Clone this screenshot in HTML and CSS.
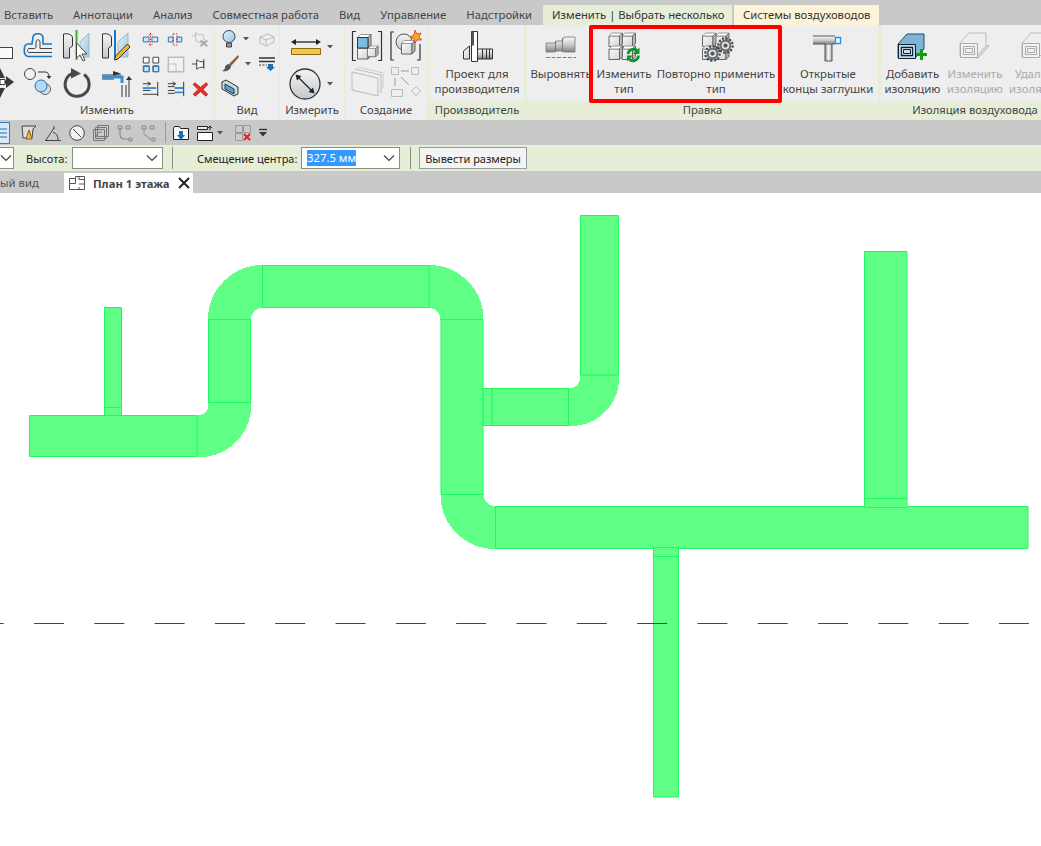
FILE: index.html
```html
<!DOCTYPE html>
<html lang="ru">
<head>
<meta charset="utf-8">
<title>План 1 этажа</title>
<link rel="stylesheet" href="styles.css">
</head>
<body>
<svg class="defs" aria-hidden="true">
  <defs>
    <linearGradient id="gb" x1="0" y1="0" x2="1" y2="1"><stop offset="0" stop-color="#e4f0f8"/><stop offset="1" stop-color="#9cc6e4"/></linearGradient>
    <linearGradient id="gg" x1="0" y1="0" x2="0" y2="1"><stop offset="0" stop-color="#f4f4f4"/><stop offset="1" stop-color="#c4c8cc"/></linearGradient>
    <linearGradient id="gm" x1="0" y1="0" x2="0" y2="1"><stop offset="0" stop-color="#fafafa"/><stop offset=".55" stop-color="#c4c8cc"/><stop offset="1" stop-color="#7e8388"/></linearGradient>
    <linearGradient id="gv" x1="0" y1="0" x2="1" y2="0"><stop offset="0" stop-color="#8a8f94"/><stop offset=".5" stop-color="#fafafa"/><stop offset="1" stop-color="#a4a8ac"/></linearGradient>
    <linearGradient id="gf" x1="0" y1="0" x2="1" y2="1"><stop offset="0" stop-color="#fbfbfb"/><stop offset="1" stop-color="#d0d3d6"/></linearGradient>
    <symbol id="cube" viewBox="0 0 15 15" overflow="visible">
      <path d="M.5 3.500h10.500v10.500H.5z" fill="url(#gf)" stroke="#666"/>
      <path d="M.5 3.500l3-3h10.500l-3 3z" fill="#fff" stroke="#999"/>
      <path d="M11 3.500l3-3v10.500l-3 3z" fill="#b4b8bd" stroke="#666"/>
    </symbol>
    <symbol id="gear" viewBox="0 0 16 16">
      <circle cx="8" cy="8" r="6.800" fill="none" stroke="#45484b" stroke-width="2" stroke-dasharray="2.100 1.450"/>
      <circle cx="8" cy="8" r="5.600" fill="#6a6e72"/>
      <circle cx="8" cy="8" r="3.600" fill="#e2e4e6"/>
      <circle cx="8" cy="8" r="2" fill="#54585c"/>
    </symbol>
    <symbol id="chev" viewBox="0 0 12 8"><path d="M1 1.500l5 5 5-5" fill="none" stroke="#444" stroke-width="1.200"/></symbol>
    <symbol id="caret" viewBox="0 0 6 4"><path d="M0 0h6L3 3.500z" fill="#555"/></symbol>
  </defs>
</svg>

<div class="tabs">
  <span class="tab">Вставить</span>
  <span class="tab">Аннотации</span>
  <span class="tab">Анализ</span>
  <span class="tab">Совместная работа</span>
  <span class="tab">Вид</span>
  <span class="tab">Управление</span>
  <span class="tab">Надстройки</span>
  <span class="tab tab-modify">Изменить | Выбрать несколько</span>
  <span class="tab tab-system">Системы воздуховодов</span>
</div>

<div class="ribbon">
  <section class="panel p-modify">
    <div class="body modify-grid">
      <svg class="big" width="20" height="36" viewBox="0 27 20 36"><rect x="-12" y="47.500" width="24.500" height="11" fill="#fafafa" stroke="#444"/></svg>
      <svg class="big" width="38" height="36" viewBox="20 27 38 36"><path d="M52 44h-9v-6c0-5-9-6-10-1l-1 7h-4c-5 0-5 12 0 12.500h24" fill="none" stroke="#1a78c2" stroke-width="1.600"/><path d="M52 48.500H40V42c0-3-4-3-4 0v5c0 1-1 1.500-2 1.500h-5c-2 0-2 4 0 4h23" fill="none" stroke="#444"/></svg>
      <svg class="big" width="38" height="36" viewBox="58 27 38 36"><path d="M63.500 34c5-1 9 1 9 4v8l-3 2v10h-6z" fill="url(#gg)" stroke="#333"/><path d="M76.500 30v30" stroke="#3fae2a" stroke-width="2"/><path d="M80 42l9-9v24h-9z" fill="url(#gb)" stroke="#9bb"/><path d="M76.500 43v15l3.500-3 3 6 2-1-3-6h5z" fill="#fff" stroke="#444"/></svg>
      <svg class="big" width="42" height="36" viewBox="96 27 42 36"><path d="M102.500 34c5-1 9 1 9 4v8l-3 2v10h-6z" fill="url(#gg)" stroke="#333"/><path d="M115 30v30" stroke="#1a78c2" stroke-width="2"/><path d="M118 42l10-9v24h-10z" fill="url(#gb)" stroke="#9bb"/><path d="M130 47l-12 12-3.500 1 1-4 12-12z" fill="#f5b52a" stroke="#333"/></svg>
      <svg class="small" width="24" height="24" viewBox="138 27 25 25"><path d="M142.500 37.500h6v5h-6zM151.500 37.500h6v5h-6z" fill="#d5e8f7" stroke="#1a6fb5"/><path d="M148 35h4M148 45h4M150 33v14" stroke="#d22" stroke-dasharray="1.500 1.500"/></svg>
      <svg class="small" width="24" height="24" viewBox="163 27 25 25"><path d="M167.500 37.500h5v5h-5zM176.500 37.500h5v5h-5z" fill="#d5e8f7" stroke="#1a6fb5"/><path d="M172.500 34h4v12h-4z" fill="none" stroke="#d22" stroke-dasharray="1.500 1.500"/></svg>
      <svg class="small" width="24" height="24" viewBox="189 27 25 25"><path d="M192 36h4M196 33l3 2h5l1 8h-5l-4-2z" fill="#eee" stroke="#bbb"/><path d="M201 41l7 6M208 41l-7 6" stroke="#aaa" stroke-width="2"/></svg>
      <svg class="small" width="24" height="24" viewBox="138 51 25 25"><path d="M142.500 56.500h6v6h-6zM152.500 56.500h6v6h-6zM142.500 65.500h6v6h-6zM152.500 65.500h6v6h-6z" fill="#fff" stroke="#444"/><path d="M143 66h5.500v5.500H143zM153 66h5.500v5.500H153z" fill="#cfe3f4" stroke="#1a6fb5"/></svg>
      <svg class="small" width="24" height="24" viewBox="163 51 25 25"><path d="M167.500 56.500h16v15h-16z" fill="#f1f1f1" stroke="#bbb" stroke-width="1.500"/><path d="M167.500 63.500h8v8h-8z" fill="none" stroke="#bbb"/></svg>
      <svg class="small" width="24" height="24" viewBox="189 51 25 25"><path d="M192 63.500h5M197 59l3 2h4v6h-4l-3 2z" fill="#fafafa" stroke="#444"/><path d="M204.500 58.500v10" stroke="#444"/></svg>
      <svg class="small" width="24" height="24" viewBox="138 76 25 25"><path d="M142 83h8M142 90h8M142 94h16" stroke="#333"/><path d="M147 81l3 2-3 2" fill="none" stroke="#333"/><path d="M142 87.500h14" stroke="#3b8fd8" stroke-width="2"/><path d="M157.500 81v15" stroke="#333"/></svg>
      <svg class="small" width="24" height="24" viewBox="163 76 25 25"><path d="M167 83h8M167 86h7M167 90h7M167 93h7" stroke="#333"/><path d="M172 81l3 2-3 2" fill="none" stroke="#333"/><path d="M174 87.500h9M174 92h9" stroke="#3b8fd8" stroke-width="2"/><path d="M183.500 81v15" stroke="#333"/></svg>
      <svg class="small" width="24" height="24" viewBox="189 76 25 25"><path d="M195 82l6 5 6-5 1.500 2-5 5 5 5-2 2-5.500-5-5.500 5-2-2 5-5-5-5z" fill="#e8302c" stroke="#c41f1c"/></svg>
      <svg class="big" width="20" height="36" viewBox="0 63 20 36"><path d="M-5 77l5-10 5 10zM-5 87l5 10 5-10zM6 75l8 6-8 6z" fill="#3a3a3a"/><path d="M0 78.500h5v5H0z" fill="#fff" stroke="#333"/><path d="M5 81h2" stroke="#333" stroke-width="3"/></svg>
      <svg class="big" width="38" height="36" viewBox="20 63 38 36"><circle cx="30" cy="73" r="5.500" fill="#f2f2f2" stroke="#444"/><path d="M38 71h7c3 0 4 2 4 5" fill="none" stroke="#333"/><path d="M46.500 75h5l-2.500 3z" fill="#333"/><circle cx="45" cy="88" r="5.500" fill="#cfe3f4" stroke="#666"/><circle cx="41" cy="85" r="6" fill="#b9d8ef" stroke="#1a6fb5"/></svg>
      <svg class="big" width="38" height="36" viewBox="58 63 38 36"><path d="M72 72.500a12 12 0 1 0 12 1" fill="none" stroke="#434a4f" stroke-width="3"/><path d="M71 67l10 5.500-10 5z" fill="#434a4f"/></svg>
      <svg class="big" width="42" height="36" viewBox="96 63 42 36"><path d="M102 74h19M102 78h12M122 96V84M126 96V84M129 96V79" stroke="#333"/><path d="M113 70l8 2.500-8 2.500z" fill="#333"/><path d="M129 75l3 4h-6z" fill="#333"/><path d="M102 76h20v6" fill="none" stroke="#3b8fd8" stroke-width="3"/></svg>
    </div>
    <div class="label">Изменить</div>
  </section>

  <section class="panel p-view">
    <div class="body view-grid">
      <span class="cell"><svg width="16" height="20" viewBox="0 0 16 20"><circle cx="8" cy="7.500" r="6" fill="url(#gb)" stroke="#345"/><path d="M5.500 14h5v4h-5z" fill="#999" stroke="#444"/></svg><svg class="caret" width="6" height="4"><use href="#caret"/></svg></span>
      <svg width="18" height="16" viewBox="0 0 18 16"><path d="M2 6l8-3 6 3v5l-8 4-6-3z" fill="#eee" stroke="#bbb"/><path d="M2 6l6 3 8-3M8 9v6" fill="none" stroke="#bbb"/></svg>
      <span class="cell"><svg width="18" height="18" viewBox="0 0 18 18"><path d="M17 0L8 9l2 2 8-9z" fill="#9a5a2a"/><path d="M8 9l2 2c0 4-5 6-9 5 3-1 3-3 3-4s2-3 4-3z" fill="#555"/></svg><svg class="caret" width="6" height="4"><use href="#caret"/></svg></span>
      <svg width="18" height="16" viewBox="0 0 18 16"><path d="M1 2h16M1 5.500h16" stroke="#333" stroke-width="1.500"/><path d="M1 9h8" stroke="#333" stroke-dasharray="2 1.500"/><path d="M10 8h5v3h2l-4.500 4L8 11h2z" fill="#1a6fb5"/></svg>
      <span class="cell"><svg width="18" height="18" viewBox="0 0 18 18"><path d="M1 3l4-2 12 7v7l-4 2L1 10z" fill="#cdd" stroke="#333"/><path d="M4 5l9 5v5L4 10z" fill="#5aa2dc" stroke="#234"/></svg></span>
      <span></span>
    </div>
    <div class="label">Вид</div>
  </section>

  <section class="panel p-measure">
    <div class="body measure-grid">
      <svg width="30" height="18" viewBox="0 0 30 18"><path d="M2 4h26" stroke="#222" stroke-width="1.300"/><path d="M0 4l5-3v6zM30 4l-5-3v6z" fill="#222"/><path d="M.5 10.500h29v6H.5z" fill="#f1c84a" stroke="#8a6a12"/></svg>
      <svg class="caret" width="6" height="4"><use href="#caret"/></svg>
      <svg width="32" height="32" viewBox="0 0 32 32"><circle cx="16" cy="16" r="15" fill="url(#gg)" stroke="#333" stroke-width="1.300"/><path d="M8 8l16 16" stroke="#222" stroke-width="1.300"/><path d="M6.500 6.500l6 1.500-4.500 4.500zM25.500 25.500l-6-1.500 4.500-4.500z" fill="#222"/></svg>
      <svg class="caret" width="6" height="4"><use href="#caret"/></svg>
    </div>
    <div class="label">Измерить</div>
  </section>

  <section class="panel p-create">
    <div class="body create-grid">
      <svg width="32" height="32" viewBox="0 0 32 32"><path d="M5 1.500H1.500v29H5M27 1.500h3.500v29H27" fill="none" stroke="#333" stroke-width="1.200"/><use href="#cube" x="6" y="15" width="15" height="15"/><use href="#cube" x="16" y="15" width="12" height="13"/><use href="#cube" x="6" y="4" width="15" height="15"/><path d="M6.500 7.500h10.500v10.500H6.500z" fill="#7fb9e0" stroke="#333"/></svg>
      <svg width="32" height="32" viewBox="0 0 32 32"><path d="M4 2H1v28h3M27 30h3V14" fill="none" stroke="#333" stroke-width="1.200"/><circle cx="14" cy="12" r="8" fill="url(#gg)" stroke="#555"/><use href="#cube" x="11" y="10" width="15" height="15"/><path d="M25 0l2 4 4-1-2 4 3 3-5 0-2 3-1-4-4-2 4-2z" fill="#f5a623" stroke="#d9261c" stroke-width=".7"/></svg>
      <svg width="34" height="34" viewBox="0 0 34 34"><path d="M2 6l26 6v18L2 24z" fill="#eee" stroke="#bbb"/><path d="M5 3l26 6v18" fill="none" stroke="#bbb"/><path d="M8 1l25 6v15" fill="none" stroke="#ccc"/></svg>
      <svg width="30" height="32" viewBox="0 0 30 32"><path d="M.5.500h7v7h-7zM20.500.500h7v7h-7zM.5 22.500h11v7H.5z" fill="#eee" stroke="#bbb"/><path d="M20.500 24l4.500-4.500 4.500 4.500-4.500 4.500z" fill="#eee" stroke="#bbb"/><path d="M10 4h8M4 11v8M10 10l8 8" stroke="#999"/></svg>
    </div>
    <div class="label">Создание</div>
  </section>

  <section class="panel p-maker ctx">
    <div class="body tools">
      <div class="tool w-maker">
        <div class="ico"><svg width="32" height="32" viewBox="0 0 32 32"><path d="M2.500 29v-8l6-5v13z" fill="url(#gf)" stroke="#333"/><path d="M16.500 19h15v10h-15z" fill="url(#gm)" stroke="#333"/><path d="M21.500 19v10M25.500 19v10M28.500 19v10" stroke="#333"/><path d="M10.500 1.500h6v30h-6z" fill="#fff" stroke="#333"/><path d="M10.500 1.500h2.500v14h-2.500z" fill="#555"/></svg></div>
        <div class="txt">Проект для<br>производителя</div>
      </div>
    </div>
    <div class="label">Производитель</div>
  </section>

  <section class="panel p-edit ctx">
    <div class="body tools">
      <div class="tool w-align">
        <div class="ico"><svg width="32" height="24" viewBox="0 0 32 24"><path d="M1 9h9l1-2h6l2-4h11v15H19l-2-1h-6l-1 1H1z" fill="url(#gm)" stroke="#777" stroke-width=".8"/><path d="M10.500 7v11M17.500 4v14" stroke="#666" stroke-width=".8"/><path d="M1 23.500h30" stroke="#3b8fd8" stroke-dasharray="4 1.500"/></svg></div>
        <div class="txt">Выровнять</div>
      </div>
      <div class="tool w-change">
        <div class="ico"><svg width="32" height="32" viewBox="0 0 32 32"><use href="#cube" x="13.500" y="2.500" width="15" height="15"/><use href="#cube" x=".5" y="2.500" width="15" height="15"/><use href="#cube" x="13.500" y="15.500" width="15" height="15"/><use href="#cube" x=".5" y="15.500" width="15" height="15"/><path d="M20 24a5.500 5.500 0 0 1 9.500-3M30.500 25.500a5.500 5.500 0 0 1-9.500 3.500" fill="none" stroke="#12932c" stroke-width="2.800"/><path d="M31.500 17.500v6.500h-6.500zM19 31.500v-6h6z" fill="#12932c"/></svg></div>
        <div class="txt">Изменить<br>тип</div>
      </div>
      <div class="tool w-reapply">
        <div class="ico"><svg width="32" height="32" viewBox="0 0 32 32"><use href="#cube" x="15" y="2.500" width="15" height="15"/><use href="#cube" x="2" y="2.500" width="15" height="15"/><use href="#cube" x="15" y="15.500" width="15" height="15"/><use href="#cube" x="2" y="15.500" width="15" height="15"/><use href="#gear" x="17" y="7" width="17" height="17"/><use href="#gear" x="4" y="15" width="17" height="17"/></svg></div>
        <div class="txt">Повторно применить<br>тип</div>
      </div>
      <div class="tool w-caps">
        <div class="ico"><svg width="32" height="32" viewBox="0 0 32 32"><path d="M13 14h7v17h-7z" fill="url(#gv)" stroke="#555"/><path d="M1 6h22v8H1z" fill="url(#gm)"/><path d="M1 6h22M1 14h12M20 14h3" stroke="#555" fill="none"/><path d="M23.500 7.500h5v6h-5z" fill="#fff" stroke="#2a8fe0" stroke-width="1.400"/></svg></div>
        <div class="txt">Открытые<br>концы заглушки</div>
      </div>
    </div>
    <div class="label">Правка</div>
  </section>

  <section class="panel p-ins ctx">
    <div class="body tools">
      <div class="tool w-ins">
        <div class="ico"><svg width="32" height="28" viewBox="0 0 32 28"><path d="M1 12L10 2h17v15l-9 9H1z" fill="#7fb4d4" stroke="#1a4a70"/><path d="M1.500 12.500h17v14h-17z" fill="#bcdcf0" stroke="#123"/><path d="M4.500 15.500h11v8h-11z" fill="#fff" stroke="#123" stroke-width="1.300"/><path d="M6.500 17.500h7v4h-7z" fill="#cde" stroke="#123"/><path d="M24.500 17v11M19 22.500h11" stroke="#0aa012" stroke-width="3"/></svg></div>
        <div class="txt">Добавить<br>изоляцию</div>
      </div>
      <div class="tool w-ins off">
        <div class="ico"><svg width="32" height="30" viewBox="0 0 32 30"><path d="M1 12L10 2h17v15l-9 9H1z" fill="#eee" stroke="#bbb"/><path d="M1.500 12.500h17v14h-17z" fill="#f2f2f2" stroke="#aaa"/><path d="M4.500 15.500h11v8h-11zM6.500 17.500h7v4h-7z" fill="none" stroke="#aaa"/><path d="M30 15l-9 10-3 3 1-4 9-10z" fill="#ddd" stroke="#bbb"/></svg></div>
        <div class="txt">Изменить<br>изоляцию</div>
      </div>
      <div class="tool w-ins off">
        <div class="ico"><svg width="32" height="30" viewBox="0 0 32 30"><path d="M1 12L10 2h17v15l-9 9H1z" fill="#eee" stroke="#bbb"/><path d="M1.500 12.500h17v14h-17z" fill="#f2f2f2" stroke="#aaa"/><path d="M4.500 15.500h11v8h-11zM6.500 17.500h7v4h-7z" fill="none" stroke="#aaa"/></svg></div>
        <div class="txt">Удалить<br>изоляцию</div>
      </div>
    </div>
    <div class="label">Изоляция воздуховода</div>
  </section>

  <div class="callout"></div>
</div>

<div class="qat">
  <span class="qat-sel"><svg width="8" height="18" viewBox="0 0 8 18"><path d="M0 5h7M0 9h7M0 13h7" stroke="#1a6fb5"/></svg></span>
  <svg width="16" height="16" viewBox="0 0 16 16"><path d="M1 1l14 0-3 3-1 9H2z" fill="#ddd" stroke="#444"/><path d="M8 5l3 9H5z" fill="#f2b84a" stroke="#8a5a12"/></svg>
  <svg width="16" height="16" viewBox="0 0 16 16"><path d="M0 15.500h16M1 15L9 3" stroke="#444"/><path d="M8 7a8 8 0 0 1 5 8" fill="none" stroke="#444"/><path d="M9 1v3" stroke="#444"/></svg>
  <svg width="16" height="16" viewBox="0 0 16 16"><circle cx="8" cy="8" r="7.300" fill="#f2f2f2" stroke="#444"/><path d="M4 4l8 8" stroke="#444"/></svg>
  <svg width="16" height="16" viewBox="0 0 16 16"><path d="M4.500.5h11v11h-11zM2.500 2.500h11v11h-11zM.5 4.500h11v11H.5z" fill="#ccc" stroke="#777"/><path d="M3 13c0-4 2-6 6-6" fill="none" stroke="#777"/></svg>
  <svg width="16" height="16" viewBox="0 0 16 16"><path d="M3 3v7c0 3 2 4 5 4h4" fill="none" stroke="#888" stroke-width="1.200"/><path d="M1 1h4v3H1zM12 13h3v3h-3zM9 1h4v3H9z" fill="none" stroke="#888"/></svg>
  <svg width="16" height="16" viewBox="0 0 16 16"><path d="M3 4v5l7 6" fill="none" stroke="#888" stroke-dasharray="2 1" stroke-width="1.200"/><path d="M1 1h4v3H1zM11 13h3v3h-3zM9 1h4v3H9z" fill="none" stroke="#888"/></svg>
  <i class="qat-sep"></i>
  <svg width="16" height="16" viewBox="0 0 16 16"><path d="M.5 3.500l1-2h5l1 2h8v11H.5z" fill="#f7f7f7" stroke="#222"/><path d="M6 6h4v4h2l-4 5-4-5h2z" fill="#1a6fb5"/></svg>
  <span class="qat-drop"><svg width="16" height="16" viewBox="0 0 16 16"><path d="M.5 1.500h10v3H.5z" fill="#eee" stroke="#222"/><path d="M.5 7.500h15v8H.5z" fill="#fff" stroke="#222"/><path d="M13 1v4M11 3l2-2 2 2" fill="none" stroke="#222"/></svg><svg class="caret" width="6" height="4"><use href="#caret"/></svg></span>
  <span class="qat-drop"><svg width="16" height="16" viewBox="0 0 16 16"><path d="M.5.500h7v7h-7zM8.500.500h7v7h-7zM.5 8.500h7v7h-7z" fill="#ccc" stroke="#999"/><path d="M9 9l6 6M15 9l-6 6" stroke="#d22" stroke-width="2"/></svg></span>
  <svg class="qat-more" width="10" height="8" viewBox="0 0 10 8"><path d="M1 .5h8" stroke="#333" stroke-width="1.400"/><path d="M1 3h8L5 7.500z" fill="#333"/></svg>
</div>

<div class="options">
  <span class="combo combo-cut"><svg class="chev" width="12" height="8"><use href="#chev"/></svg></span>
  <span class="opt-label first">Высота:</span>
  <span class="combo combo-h"><svg class="chev" width="12" height="8"><use href="#chev"/></svg></span>
  <i class="opt-sep"></i>
  <span class="opt-label second">Смещение центра:</span>
  <span class="combo combo-o"><span class="sel">327.5 мм</span><svg class="chev" width="12" height="8"><use href="#chev"/></svg></span>
  <i class="opt-sep sep-b"></i>
  <button class="opt-btn" type="button">Вывести размеры</button>
</div>

<div class="doctabs">
  <span class="doc-prev">ый вид</span>
  <span class="doc-active">
    <svg width="16" height="14" viewBox="0 0 16 14"><path d="M.5 2.500h6v-2h9v13H.5z" fill="#fff" stroke="#555"/><path d="M6.500 2.500v5h-6M10 .5v3h5.500M10 8h5.500M10 11v2.500" fill="none" stroke="#555"/></svg>
    <b>План 1 этажа</b>
    <svg width="12" height="12" viewBox="0 0 12 12"><path d="M1 1l10 10M11 1L1 11" stroke="#222" stroke-width="2"/></svg>
  </span>
</div>

<svg class="canvas" width="1041" height="653" viewBox="0 193 1041 653">
  <g class="elbow">
    <path d="M197 415.500h2a9.500 9.500 0 0 0 9.500-10v-3h42v3a51 51 0 0 1-51 51H197z"/>
    <path d="M208.500 319.500a54 54 0 0 1 54-54v42a12 12 0 0 0-12 12z"/>
    <path d="M429 265.500a54 54 0 0 1 54 54h-42a12 12 0 0 0-12-12z"/>
    <path d="M441 494.500h42a12 12 0 0 0 12.500 12v42a54 54 0 0 1-54.500-54z"/>
    <path d="M568.500 388.500h2a10 10 0 0 0 10-10v-3.500h38v3a47.500 47.500 0 0 1-47.500 47.500h-2.500z"/>
  </g>
  <g class="duct">
    <path d="M104.500 307.500h17v108h-17z"/>
    <path d="M104.500 407.500h17"/>
    <path d="M29.500 415.500h167.500v41H29.500z"/>
    <path d="M208.500 319.500h42v83h-42z"/>
    <path d="M262.500 265.500h166.500v42H262.500z"/>
    <path d="M441 319.500h42v175h-42z"/>
    <path d="M495.500 506.500h532.500v42H495.500z"/>
    <path d="M483 388.500h9v37h-9z"/>
    <path d="M492 388.500h76.500v37H492z"/>
    <path d="M580.500 215.500h38V375h-38z"/>
    <path d="M864.500 251.500h42.500v256h-42.500z"/>
    <path d="M864.500 498.500h42.500"/>
    <path d="M653.500 547.500h25v249.500h-25z"/>
    <path d="M653.500 556.500h25"/>
  </g>
  <path class="dash" d="M0 623.500H1029"/>
</svg>
</body>
</html>
```

FILE: styles.css
```css
* { box-sizing: border-box; }
html, body { margin: 0; padding: 0; }
body {
  width: 1041px;
  height: 846px;
  overflow: hidden;
  background: #fff;
  font-family: "Noto Sans", "Open Sans", sans-serif;
  font-size: 11.300px;
  color: #444;
}
svg { display: block; flex: none; overflow: visible; }
.defs { position: absolute; width: 0; height: 0; }

.tabs {
  height: 25px;
  background: #c9c9c9;
  display: flex;
  padding-left: 4px;
  align-items: flex-end;
  font-size: 11.280px;
}
.tab { height: 20px; line-height: 20px; margin-right: 20px; white-space: nowrap; }
.tab-modify { background: #e6eed8; margin: 0 2px 0 -9px; padding: 0 9px; color: #333; width: 189px; flex: none; }
.tab-system { background: #fdf3d9; margin: 0; padding: 0 9px; color: #333; width: 145px; flex: none; }

.ribbon {
  position: relative;
  height: 95px;
  width: 1200px;
  display: flex;
  gap: 1px;
  background: #e6eed8;
  font-size: 11.400px;
}
.panel { display: flex; flex-direction: column; background: #eeeeee; flex: none; }
.body { height: 76px; flex: none; }
.label { height: 19px; line-height: 18px; text-align: center; white-space: nowrap; font-size: 11.200px; }
.ctx .label { background: #e6eed8; }
.p-modify { width: 214px; }
.p-view { width: 64px; }
.p-measure { width: 64px; }
.p-create { width: 82px; }
.p-maker { width: 94px; margin-left: 2px; }
.p-edit { width: 351px; margin-left: 2px; }
.p-ins { width: 188px; margin-left: 2px; }

.modify-grid {
  display: grid;
  grid-template-columns: 20px 38px 38px 42px 25px 25px 25px;
  grid-template-rows: repeat(6, 12.330px);
  padding-top: 2px;
  place-items: center;
}
.modify-grid > :nth-child(1) { grid-area: 1 / 1 / span 3 / span 1; }
.modify-grid > :nth-child(2) { grid-area: 1 / 2 / span 3 / span 1; }
.modify-grid > :nth-child(3) { grid-area: 1 / 3 / span 3 / span 1; }
.modify-grid > :nth-child(4) { grid-area: 1 / 4 / span 3 / span 1; }
.modify-grid > :nth-child(5) { grid-area: 1 / 5 / span 2 / span 1; }
.modify-grid > :nth-child(6) { grid-area: 1 / 6 / span 2 / span 1; }
.modify-grid > :nth-child(7) { grid-area: 1 / 7 / span 2 / span 1; }
.modify-grid > :nth-child(8) { grid-area: 3 / 5 / span 2 / span 1; }
.modify-grid > :nth-child(9) { grid-area: 3 / 6 / span 2 / span 1; }
.modify-grid > :nth-child(10) { grid-area: 3 / 7 / span 2 / span 1; }
.modify-grid > :nth-child(11) { grid-area: 5 / 5 / span 2 / span 1; }
.modify-grid > :nth-child(12) { grid-area: 5 / 6 / span 2 / span 1; }
.modify-grid > :nth-child(13) { grid-area: 5 / 7 / span 2 / span 1; }
.modify-grid > :nth-child(14) { grid-area: 4 / 1 / span 3 / span 1; }
.modify-grid > :nth-child(15) { grid-area: 4 / 2 / span 3 / span 1; }
.modify-grid > :nth-child(16) { grid-area: 4 / 3 / span 3 / span 1; }
.modify-grid > :nth-child(17) { grid-area: 4 / 4 / span 3 / span 1; }

.view-grid {
  display: grid;
  grid-template-columns: 40px 24px;
  grid-template-rows: repeat(3, 24.500px);
  padding-top: 2px;
  align-items: center;
  justify-items: center;
}
.cell { display: flex; align-items: center; gap: 6px; justify-self: start; padding-left: 6px; }
.caret { width: 6px; height: 4px; }

.measure-grid {
  display: grid;
  grid-template-columns: 44px 20px;
  grid-template-rows: 37px 37px;
  padding: 3px 0 0 0;
  align-items: center;
  justify-items: center;
}
.measure-grid svg:nth-child(odd) { justify-self: end; margin-right: 3px; }
.measure-grid .caret { justify-self: start; margin-left: 3px; }

.create-grid {
  display: grid;
  grid-template-columns: 41px 37px;
  grid-template-rows: 37px 37px;
  padding: 2px 0 0 1px;
  place-items: center;
}

.tools { display: flex; }
.tool { display: flex; flex-direction: column; align-items: center; text-align: center; line-height: 15px; flex: none; }
.ico { height: 41px; display: flex; align-items: center; justify-content: center; }
.txt { white-space: nowrap; }
.w-maker { width: 94px; }
.w-align { width: 68px; }
.w-change { width: 58px; }
.w-reapply { width: 126px; }
.w-caps { width: 98px; }
.w-ins { width: 62px; }
.w-ins:first-child { width: 63px; }
.off { color: #aaa; }

.callout {
  position: absolute;
  left: 589px;
  top: 0;
  width: 193px;
  height: 78px;
  border: 4px solid #f00;
  border-radius: 2px;
}

.qat {
  height: 25px;
  background: #c9c9c9;
  display: flex;
  align-items: center;
  gap: 8px;
}
.qat-sel {
  width: 10px;
  height: 22px;
  background: #d8e8f6;
  border: 1px solid #2a7fc8;
  border-left: 0;
  display: flex;
  align-items: center;
  margin-right: 3px;
}
.qat-sep { width: 1px; height: 21px; background: #999; margin-right: -1px; }
.qat-drop { display: flex; align-items: center; gap: 4px; margin-right: 4px; }
.qat-more { margin-left: -5px; }

.options {
  height: 26px;
  background: #e6eed8;
  display: flex;
  align-items: center;
  color: #222;
  font-size: 11px;
}
.opt-label { white-space: nowrap; flex: none; }
.combo {
  height: 22px;
  background: #fff;
  border: 1px solid #8a8f85;
  display: flex;
  align-items: center;
  justify-content: flex-end;
  padding-right: 4px;
  flex: none;
}
.combo-cut { width: 14px; border-left: 0; padding-right: 1px; }
.combo-h { width: 91px; margin-left: 4px; }
.combo-o { width: 99px; margin-left: 4px; justify-content: space-between; padding-left: 5px; }
.sel { background: #3399ff; color: #fff; line-height: 16px; font-size: 11.300px; }
.first { margin-left: 12px; width: 42px; }
.second { margin-left: 24px; width: 100px; }
.opt-sep { width: 1px; height: 22px; background: #8a8f85; margin-left: 9px; flex: none; }
.sep-b { margin-left: 10px; }
.opt-btn {
  height: 22px;
  width: 108px;
  margin-left: 8px;
  padding: 0;
  background: #f4f4f4;
  border: 1px solid #9a9a9a;
  font: inherit;
  color: #222;
  flex: none;
}

.doctabs {
  height: 22px;
  background: #c9c9c9;
  display: flex;
  align-items: flex-end;
  color: #555;
}
.doc-prev { width: 64px; height: 20px; line-height: 20px; }
.doc-active {
  width: 129px;
  height: 20px;
  background: #fff;
  display: flex;
  align-items: center;
  padding-left: 5px;
  color: #444;
}
.doc-active b { margin-left: 8px; font-weight: 700; width: 85px; white-space: nowrap; }

.canvas { background: #fff; }
.dash { stroke: #0f6b0f; stroke-width: 1; stroke-dasharray: 30 30.310; stroke-dashoffset: 26.310; fill: none; }
.duct path { fill: #60ff85; stroke: #21f763; stroke-width: 1; }
.elbow path { fill: #60ff85; stroke: #60ff85; stroke-width: 1; shape-rendering: crispEdges; }
```
